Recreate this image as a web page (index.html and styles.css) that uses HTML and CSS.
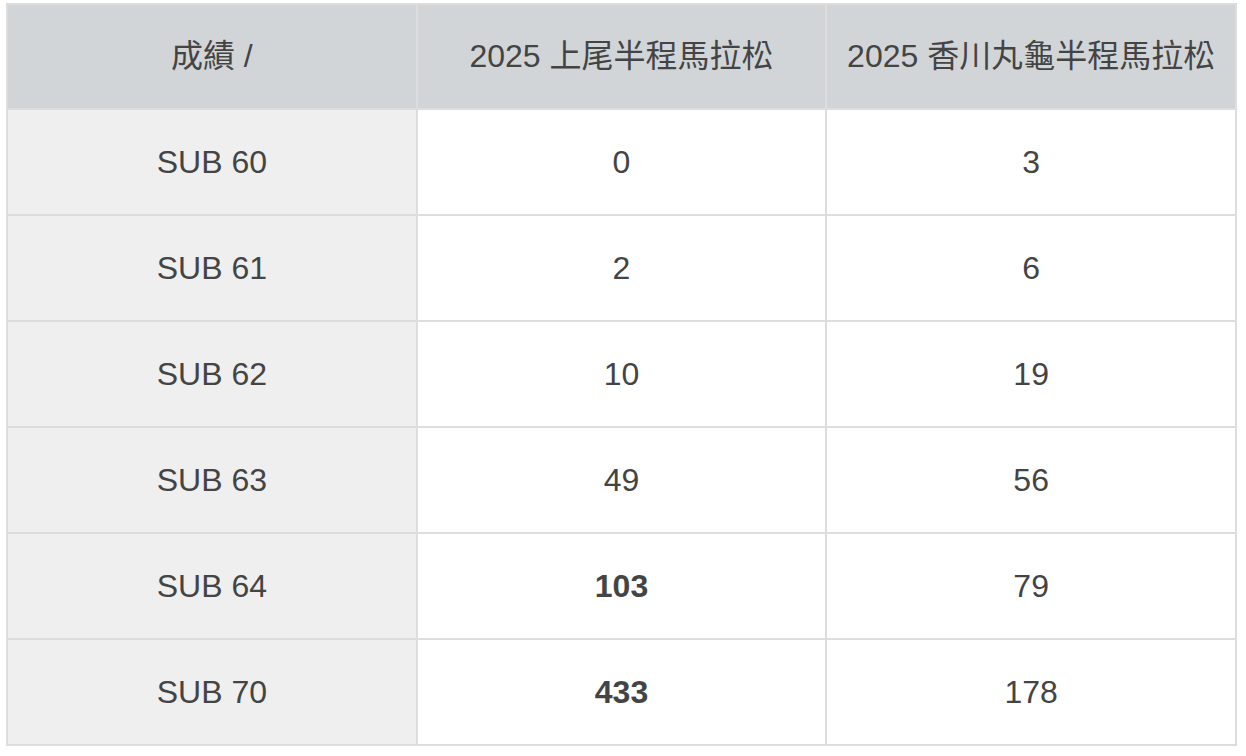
FILE: index.html
```
<!DOCTYPE html>
<html lang="zh-Hant">
<head>
<meta charset="utf-8">
<link rel="stylesheet" href="styles.css">
</head>
<body>
<table class="results">
  <thead>
    <tr><th>成績 /</th><th>2025 上尾半程馬拉松</th><th>2025 香川丸龜半程馬拉松</th></tr>
  </thead>
  <tbody>
    <tr><td class="label">SUB 60</td><td>0</td><td>3</td></tr>
    <tr><td class="label">SUB 61</td><td>2</td><td>6</td></tr>
    <tr><td class="label">SUB 62</td><td>10</td><td>19</td></tr>
    <tr><td class="label">SUB 63</td><td>49</td><td>56</td></tr>
    <tr><td class="label">SUB 64</td><td><strong>103</strong></td><td>79</td></tr>
    <tr><td class="label">SUB 70</td><td><strong>433</strong></td><td>178</td></tr>
  </tbody>
</table>
</body>
</html>
```
FILE: styles.css
```
html, body {
  margin: 0;
  padding: 0;
  background: #ffffff;
}
body {
  padding: 3px 0 0 6px;
  font-family: "Liberation Sans", "Noto Sans CJK TC", Arial, sans-serif;
  color: #444444;
}
.results {
  width: 1231px;
  table-layout: fixed;
  border-collapse: separate;
  border-spacing: 0;
  border-top: 2px solid #dddddd;
  border-left: 2px solid #dddddd;
  font-size: 32px;
}
.results th,
.results td {
  box-sizing: border-box;
  border-right: 2px solid #dddddd;
  border-bottom: 2px solid #dddddd;
  text-align: center;
  vertical-align: middle;
  padding: 0;
  font-weight: normal;
  line-height: 1.2;
}
.results th {
  height: 105px;
  background: #d1d5d8;
}
.results td {
  height: 106px;
  background: #ffffff;
}
.results td.label {
  background: #efefef;
}
.results strong {
  font-weight: bold;
}
```
